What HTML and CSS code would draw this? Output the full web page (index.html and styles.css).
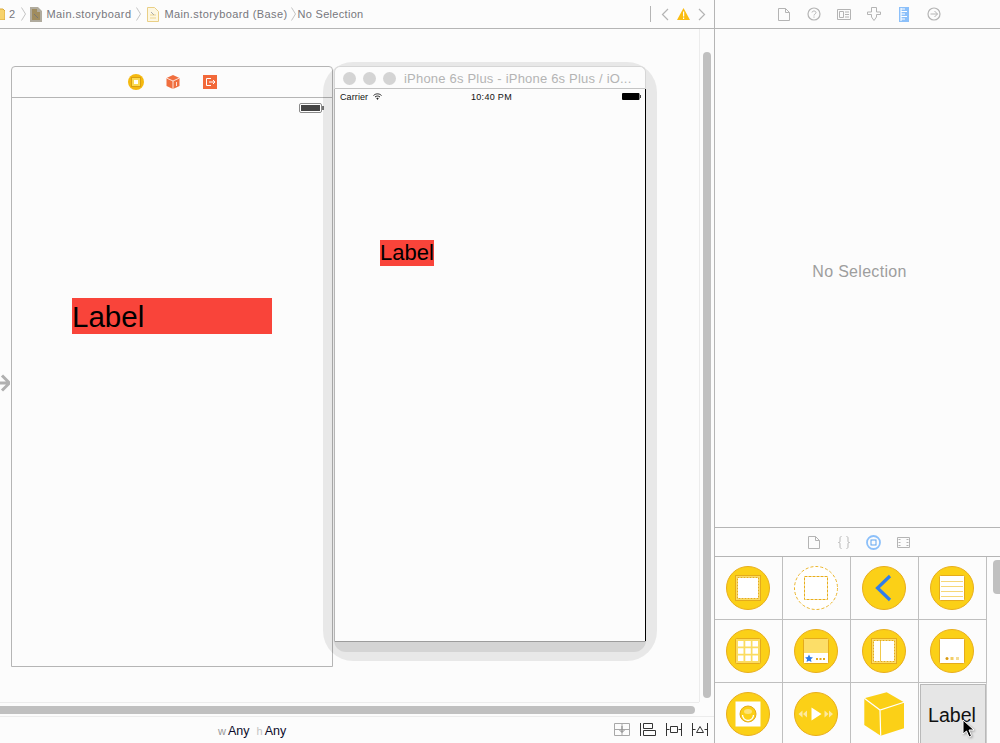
FILE: index.html
```html
<!DOCTYPE html>
<html lang="en">
<head>
<meta charset="utf-8">
<title>Main.storyboard</title>
<link rel="stylesheet" href="styles.css">
</head>
<body>
<div class="app">
  <section class="editor">
    <header class="jumpbar">
      <div class="crumbs">
        <svg class="folder" width="5" height="12" viewBox="0 0 5 12"><path d="M-6 1h9l2 2v9H-6z" fill="#f7d26a" stroke="#d9a93a"/></svg>
        <span class="crumb">2</span>
        <svg class="chev" width="5" height="14" viewBox="0 0 5 14"><path d="M.5.5 4.500 7 .5 13.500" fill="none" stroke="#c4c4c4"/></svg>
        <svg class="doc" width="12" height="15" viewBox="0 0 12 15"><path d="M0 0h8l4 4v11H0z" fill="#b0ab9e"/><path d="M2 2h5v3h3v8H2z" fill="#a08c5e"/><path d="M4 7l4 4" stroke="#777" fill="none"/></svg>
        <span class="crumb">Main.storyboard</span>
        <svg class="chev" width="5" height="14" viewBox="0 0 5 14"><path d="M.5.5 4.500 7 .5 13.500" fill="none" stroke="#c4c4c4"/></svg>
        <svg class="doc doc-base" width="12" height="15" viewBox="0 0 12 15"><path d="M.5.5h7l4 4v10H.5z" fill="#fdf7e2" stroke="#e9cf86"/><path d="M3 8h6M3 11h6" stroke="#edd58f" fill="none"/><path d="M4 5l3 3" stroke="#aaa" fill="none"/></svg>
        <span class="crumb">Main.storyboard (Base)</span>
        <svg class="chev chev-last" width="5" height="14" viewBox="0 0 5 14"><path d="M.5.5 4.500 7 .5 13.500" fill="none" stroke="#c4c4c4"/></svg>
        <span class="crumb tight">No Selection</span>
      </div>
      <div class="issues">
        <svg width="8" height="13" viewBox="0 0 8 13"><path d="M7 1 1.500 6.500 7 12" fill="none" stroke="#b4b4b4" stroke-width="1.200"/></svg>
        <svg width="13" height="12" viewBox="0 0 13 12"><path d="M6.500 0 13 12H0z" fill="#fbbd12"/><path d="M6 3.500h1.200v5H6zM6 9.500h1.200V11H6z" fill="#fff"/></svg>
        <svg width="8" height="13" viewBox="0 0 8 13"><path d="M1 1l5.500 5.500L1 12" fill="none" stroke="#b4b4b4" stroke-width="1.200"/></svg>
      </div>
    </header>

    <div class="canvas">
      <article class="scene">
        <div class="scene-bar">
          <svg width="16" height="16" viewBox="0 0 16 16"><circle cx="8" cy="8" r="8" fill="#f5b90f"/><rect x="3.500" y="3.500" width="9" height="9" fill="#fbd94f" stroke="#d99f10"/><rect x="6" y="6" width="4" height="4" fill="#fff"/></svg>
          <svg width="16" height="16" viewBox="0 0 16 16"><path d="M8 1l6.500 3v8L8 15l-6.500-3V4z" fill="#f06f3f"/><path d="M1.500 4 8 7l6.500-3M8 7v8M11.500 8v4" stroke="#fff" fill="none" stroke-width=".8"/></svg>
          <svg width="16" height="16" viewBox="0 0 16 16"><rect x="1" y="1" width="14" height="14" fill="#f2693a"/><path d="M9 4.500H4.500v7H9M7 8h6M11 6l2 2-2 2" fill="none" stroke="#fff"/></svg>
        </div>
        <div class="scene-body">
          <svg class="scene-battery" width="25" height="10" viewBox="0 0 25 10"><rect x=".5" y=".5" width="22" height="9" rx="1.500" fill="#fff" stroke="#8a8a8a"/><rect x="2" y="2" width="19" height="6" fill="#444"/><rect x="23" y="3" width="2" height="4" fill="#777"/></svg>
          <div class="label label-big">Label</div>
        </div>
      </article>

      <svg class="entry-arrow" width="10" height="20" viewBox="0 0 10 20"><path d="M-4 10h12M2 2.500l7.500 7.500L2 17.500" fill="none" stroke="#b0b0b0" stroke-width="3"/></svg>

      <div class="shadow-outer"></div>
      <div class="shadow-inner"></div>

      <article class="sim">
        <div class="sim-title">
          <i class="light"></i><i class="light"></i><i class="light"></i>
          <span class="sim-name">iPhone 6s Plus - iPhone 6s Plus / iO...</span>
        </div>
        <div class="sim-screen">
          <div class="status">
            <span class="carrier">Carrier</span>
            <svg class="wifi" width="9" height="7" viewBox="0 0 9 7"><path d="M.5 2.500C3 .3 6 .3 8.500 2.500M2 4c1.600-1.300 3.400-1.300 5 0" fill="none" stroke="#222"/><path d="M3.300 5.200 4.500 7l1.200-1.800c-.8-.5-1.600-.5-2.400 0z" fill="#222"/></svg>
            <span class="clock">10:40 PM</span>
            <svg class="sim-battery" width="19" height="7" viewBox="0 0 19 7"><rect width="17.500" height="7" rx="1" fill="#000"/><rect x="18" y="2" width="1" height="3" fill="#444"/></svg>
          </div>
          <div class="label label-small">Label</div>
        </div>
      </article>

      <div class="scroll-line-v"></div>
      <div class="scroll-v"></div>
      <div class="scroll-line-h1"></div>
      <div class="scroll-h"></div>
    </div>

    <footer class="sizebar">
      <div class="size-class">
        <span class="dim">w</span><span class="any">Any</span>
        <span class="dim dim-h">h</span><span class="any">Any</span>
      </div>
      <div class="layout-tools">
        <svg width="16" height="13" viewBox="0 0 16 13"><path d="M.5.500h15v12H.5zM.5 6.500h15M8 .5v12" fill="none" stroke="#a8a8a8"/><path d="M8 3v6M5.500 7 8 9.500 10.500 7" fill="none" stroke="#8a8a8a"/></svg>
        <svg width="16" height="13" viewBox="0 0 16 13"><path d="M.5 0v13M3.500.5h9v5h-9zM3.500 7.500h12v5h-12z" fill="none" stroke="#333"/></svg>
        <svg width="16" height="13" viewBox="0 0 16 13"><path d="M.5 0v13M15.500 0v13M.5 6.500h3M12.500 6.500h3M4.500 3.500h7v6h-7z" fill="none" stroke="#333"/></svg>
        <svg width="16" height="13" viewBox="0 0 16 13"><path d="M.5 0v13M15.500 0v13M.5 6.500h3M12.500 6.500h3M4.500 9.500 8 3.500l3.500 6z" fill="none" stroke="#333"/></svg>
      </div>
    </footer>
  </section>

  <aside class="inspector">
    <nav class="tabs tabs-top">
      <span class="tab"><svg width="12" height="13" viewBox="0 0 12 13"><path d="M.5.5h7l4 4v8H.5zM7.500.5v4h4" fill="none" stroke="#b4b4b4"/></svg></span>
      <span class="tab"><svg width="14" height="14" viewBox="0 0 14 14"><circle cx="7" cy="7" r="6" fill="none" stroke="#b4b4b4" stroke-width="1.200"/><path d="M5 5.500C5 3.500 9 3.500 9 5.500c0 1.500-2 1.500-2 3M7 9.500v1.200" fill="none" stroke="#b4b4b4"/></svg></span>
      <span class="tab"><svg width="14" height="11" viewBox="0 0 14 11"><path d="M.5.5h13v10H.5z" fill="none" stroke="#b4b4b4"/><path d="M2.500 2.500h4v6h-4z" fill="none" stroke="#b4b4b4"/><path d="M8 3h4M8 5.500h4M8 8h4" stroke="#b4b4b4"/></svg></span>
      <span class="tab"><svg width="14" height="14" viewBox="0 0 14 14"><path d="M4.500.5h5v4.500h4v2.500h-4v2.500L7 13.500 4.500 10V7.500h-4V5h4z" fill="none" stroke="#b4b4b4"/></svg></span>
      <span class="tab"><svg width="10" height="15" viewBox="0 0 10 15"><rect width="10" height="15" fill="#8cc0fa"/><path d="M2 1v13M2 2h4M2 4.500h6M2 7h4M2 9.500h6M2 12h4" stroke="#fff" stroke-width="1.100"/></svg></span>
      <span class="tab"><svg width="14" height="14" viewBox="0 0 14 14"><circle cx="7" cy="7" r="6" fill="none" stroke="#b4b4b4" stroke-width="1.200"/><path d="M3.500 7h7M7.500 4l3 3-3 3" fill="none" stroke="#b4b4b4"/></svg></span>
    </nav>
    <div class="inspector-body"><p class="empty">No Selection</p></div>

    <nav class="tabs tabs-lib">
      <span class="tab"><svg width="12" height="13" viewBox="0 0 12 13"><path d="M.5.5h7l4 4v8H.5zM7.500.5v4h4" fill="none" stroke="#b4b4b4"/></svg></span>
      <span class="tab"><svg width="12" height="13" viewBox="0 0 12 13"><path d="M3.500.5C2 .5 2 1.500 2 3v2c0 1-.5 1.500-1.500 1.500C1.500 6.500 2 7 2 8v2c0 1.500 0 2.500 1.500 2.500M8.500.5C10 .5 10 1.500 10 3v2c0 1 .5 1.500 1.500 1.500-1 0-1.500.5-1.500 1.500v2c0 1.500 0 2.500-1.500 2.500" fill="none" stroke="#b9b9b9"/></svg></span>
      <span class="tab"><svg width="15" height="15" viewBox="0 0 15 15"><circle cx="7.500" cy="7.500" r="6.500" fill="none" stroke="#8cc0fa" stroke-width="1.800"/><rect x="5" y="5" width="5" height="5" fill="none" stroke="#5ea4f0"/></svg></span>
      <span class="tab"><svg width="13" height="11" viewBox="0 0 13 11"><path d="M.5.5h12v10H.5z" fill="none" stroke="#b4b4b4"/><path d="M1.500 2.500h2M1.500 5.500h2M1.500 8.500h2M9.500 2.500h2M9.500 5.500h2M9.500 8.500h2" stroke="#b4b4b4"/></svg></span>
    </nav>
    <div class="library">
      <div class="grid">
        <div class="cell"><svg width="44" height="44" viewBox="0 0 44 44"><circle class="disc" cx="22" cy="22" r="21.500"/><rect x="9.500" y="9.500" width="25" height="25" fill="#fbdc60" stroke="#e5ab1c"/><rect x="11.500" y="11.500" width="21" height="21" fill="#fff" stroke="#e5ab1c" stroke-dasharray="2 1"/></svg></div>
        <div class="cell"><svg width="44" height="44" viewBox="0 0 44 44"><circle cx="22" cy="22" r="21.500" fill="#fff" stroke="#ecb62c" stroke-dasharray="3 2"/><rect x="10.500" y="10.500" width="23" height="23" fill="#fff" stroke="#e8ae1c" stroke-dasharray="3 1"/></svg></div>
        <div class="cell"><svg width="44" height="44" viewBox="0 0 44 44"><circle class="disc" cx="22" cy="22" r="21.500"/><path d="M28 10 15.500 22 28 34" fill="none" stroke="#2f7dec" stroke-width="3.200"/></svg></div>
        <div class="cell"><svg width="44" height="44" viewBox="0 0 44 44"><circle class="disc" cx="22" cy="22" r="21.500"/><rect x="9.500" y="9.500" width="25" height="25" rx="1" fill="#fff" stroke="#e5ab1c"/><path d="M11 15.500h22M11 20.500h22M11 25.500h22M11 30.500h22" stroke="#f6d778"/></svg></div>

        <div class="cell"><svg width="44" height="44" viewBox="0 0 44 44"><circle class="disc" cx="22" cy="22" r="21.500"/><rect x="9.500" y="9.500" width="25" height="25" rx="1" fill="#fbdc60" stroke="#e5ab1c"/><path fill="#fff" d="M12 12h5.500v5.500H12zM19.300 12h5.500v5.500h-5.500zM26.500 12H32v5.500h-5.500zM12 19.300h5.500v5.500H12zM19.300 19.300h5.500v5.500h-5.500zM26.500 19.300H32v5.500h-5.500zM12 26.500h5.500V32H12zM19.300 26.500h5.500V32h-5.500zM26.500 26.500H32V32h-5.500z"/></svg></div>
        <div class="cell"><svg width="44" height="44" viewBox="0 0 44 44"><circle class="disc" cx="22" cy="22" r="21.500"/><rect x="9.500" y="9.500" width="25" height="25" rx="1" fill="#fff" stroke="#e5ab1c"/><rect x="10" y="10" width="24" height="14" fill="#fcde68"/><path d="M15 25.500l1.200 2.600 2.800.3-2.100 1.900.6 2.800-2.500-1.400-2.500 1.400.6-2.800-2.100-1.900 2.800-.3z" fill="#2f7dec"/><path d="M22 29h2v2h-2zM25.500 29h2v2h-2zM29 29h2v2h-2z" fill="#e5ab1c"/></svg></div>
        <div class="cell"><svg width="44" height="44" viewBox="0 0 44 44"><circle class="disc" cx="22" cy="22" r="21.500"/><rect x="9.500" y="9.500" width="25" height="25" fill="#fcde68" stroke="#e5ab1c"/><rect x="11.500" y="11.500" width="21" height="21" fill="#fff" stroke="#e5ab1c" stroke-dasharray="2 1"/><path d="M18.500 12v20" stroke="#f0c94a"/></svg></div>
        <div class="cell"><svg width="44" height="44" viewBox="0 0 44 44"><circle class="disc" cx="22" cy="22" r="21.500"/><rect x="9.500" y="9.500" width="25" height="25" rx="1" fill="#fff" stroke="#e5ab1c"/><circle cx="17" cy="29.500" r="1.500" fill="#d99a10"/><rect x="20.500" y="28" width="3" height="3" fill="#f3cd64"/><rect x="26" y="28" width="3" height="3" fill="#f3dc96"/></svg></div>

        <div class="cell"><svg width="44" height="44" viewBox="0 0 44 44"><circle class="disc" cx="22" cy="22" r="21.500"/><rect x="9.500" y="9.500" width="25" height="25" fill="#fff"/><circle cx="22" cy="22" r="8" fill="#fbd017" stroke="#e5ab1c"/><path d="M16.500 23a5.500 5.500 0 0 0 11 0" fill="none" stroke="#fff" stroke-width="1.300"/><ellipse cx="22" cy="19.500" rx="4" ry="2.500" fill="#fde37a"/></svg></div>
        <div class="cell"><svg width="44" height="44" viewBox="0 0 44 44"><circle class="disc" cx="22" cy="22" r="21.500"/><path d="M17.500 15.500v13L27.500 22z" fill="#fff"/><path d="M8.500 18.500v7L4.500 22zM13 18.500v7L9 22zM30.500 18.500v7l4-3.500zM35 18.500v7l4-3.500z" fill="#fde9a0"/></svg></div>
        <div class="cell"><svg width="44" height="44" viewBox="0 0 44 44"><path d="M24.700.3 42 10.300v26L18.700 43.700 2.300 33V6.300z" fill="#fbd017"/><path d="M2.300 6.300 18 18 42 10.300M18 18l.7 25.700" fill="none" stroke="#fff" stroke-width="1.200"/></svg></div>
        <div class="cell cell-selected">
          <span class="lib-label">Label</span>
          <svg class="cursor" width="14" height="20" viewBox="0 0 14 20"><path d="M1 1v14l3.500-3 2.500 6 2.500-1-2.500-6H12z" fill="#000" stroke="#fff"/></svg>
        </div>
      </div>
      <div class="lib-scroll"><div class="lib-thumb"></div></div>
    </div>
  </aside>
</div>
</body>
</html>
```
FILE: styles.css
```css
* { box-sizing: border-box; }
html, body { margin: 0; padding: 0; }
body { font-family: "Liberation Sans", Arial, sans-serif; background: #fcfcfc; }
svg { display: block; flex: none; }

.app { display: flex; width: 1000px; height: 743px; overflow: hidden; background: #fcfcfc; }

.editor { width: 715px; display: flex; flex-direction: column; border-right: 1px solid #b5b5b5; }

.jumpbar { height: 29px; flex: none; border-bottom: 1px solid #b5b5b5; display: flex; align-items: center; justify-content: space-between; }
.crumbs { display: flex; align-items: center; font-size: 11px; color: #77777c; }
.folder { margin-right: 4px; }
.crumb { letter-spacing: .4px; white-space: nowrap; }
.crumbs .chev { margin: 0 4px 0 5px; }
.crumbs .chev-last { margin-left: 3px; }
.crumbs .doc { margin: 0 5px 0 0; }
.crumbs .doc-base { margin-left: 2px; }
.crumbs .tight { margin-left: -2px; letter-spacing: .3px; }
.issues { display: flex; align-items: center; gap: 8px; height: 16px; padding: 0 8px 0 10px; border-left: 1px solid #b5b5b5; }

.canvas { flex: 1; position: relative; overflow: hidden; }

.scene { position: absolute; left: 11px; top: 37px; width: 322px; height: 601px; border: 1px solid #b5b5b5; border-radius: 4px 4px 0 0; display: flex; flex-direction: column; }
.scene-bar { height: 31px; flex: none; border-bottom: 1px solid #b5b5b5; display: flex; justify-content: center; align-items: center; gap: 21px; padding-left: 2px; }
.scene-body { flex: 1; position: relative; }
.scene-battery { position: absolute; right: 8px; top: 5px; }

.label { position: absolute; background: #f9443a; color: #000; white-space: nowrap; display: flex; align-items: center; }
.label-big { left: 60px; top: 200px; width: 200px; height: 36px; padding-top: 1px; font-size: 29.500px; }
.label-small { left: 45px; top: 151px; width: 54px; height: 26px; font-size: 22px; }

.entry-arrow { position: absolute; left: 0; top: 344px; }

.shadow-outer { position: absolute; left: 323px; top: 33px; width: 334px; height: 599px; border-radius: 30px; background: rgba(0, 0, 0, .08); }
.shadow-inner { position: absolute; left: 334px; top: 60px; width: 312px; height: 563px; border-radius: 12px; background: rgba(0, 0, 0, .085); }

.sim { position: absolute; left: 334px; top: 37px; width: 312px; height: 576px; background: #fcfcfc; border-radius: 6px 6px 0 0; border: 1px solid #d6d6d6; border-bottom: 1px solid #9c9c9c; display: flex; flex-direction: column; }
.sim-title { height: 22px; flex: none; display: flex; align-items: center; gap: 7px; padding: 1px 0 0 8px; border-bottom: 1px solid #c4c4c4; }
.light { width: 13px; height: 13px; border-radius: 50%; background: #d4d4d4; }
.sim-name { margin-left: 1px; font-size: 13px; letter-spacing: .2px; color: #b4b4b4; white-space: nowrap; }
.sim-screen { flex: 1; position: relative; border-right: 1px solid #000; margin-right: -1px; border-left: 1px solid #b5b5b5; margin-left: -1px; }
.status { display: flex; align-items: center; height: 15px; padding-left: 5px; font-size: 9px; color: #111; position: relative; }
.carrier { letter-spacing: .1px; }
.wifi { margin-left: 5px; }
.clock { position: absolute; left: 136px; letter-spacing: .3px; }
.sim-battery { position: absolute; right: 4px; top: 4px; }

.scroll-line-v { position: absolute; left: 699px; top: 0; bottom: 14px; width: 1px; background: #ececec; }
.scroll-v { position: absolute; left: 703px; top: 23px; width: 8px; height: 646px; border-radius: 4px; background: #c0c0c0; }
.scroll-line-h1 { position: absolute; left: 0; right: 15px; top: 673px; height: 1px; background: #ececec; }
.scroll-h { position: absolute; left: -10px; top: 677px; width: 705px; height: 8px; border-radius: 4px; background: #c0c0c0; }

.sizebar { height: 27px; flex: none; border-top: 1px solid #ececec; display: flex; align-items: center; justify-content: space-between; padding: 0 6px 0 218px; }
.size-class { display: flex; align-items: baseline; padding-top: 1px; font-size: 12.500px; color: #0b0b2a; }
.dim { color: #9a9a9a; font-size: 11px; margin-right: 2px; }
.dim-h { margin-left: 7px; color: #c4c4c4; }
.layout-tools { display: flex; gap: 10px; margin-top: -1px; }

.inspector { flex: 1; display: flex; flex-direction: column; min-width: 0; }
.tabs { display: flex; justify-content: center; align-items: center; flex: none; }
.tab { width: 30px; display: flex; justify-content: center; }
.tabs-top { height: 29px; padding-left: 3px; border-bottom: 1px solid #b5b5b5; }
.inspector-body { height: 498px; flex: none; display: flex; justify-content: center; }
.empty { margin: 234px 0 0 4px; font-size: 16px; letter-spacing: .3px; color: #9e9e9e; height: 20px; }
.tabs-lib { height: 30px; padding-left: 2px; border-top: 1px solid #b5b5b5; border-bottom: 1px solid #b5b5b5; }

.library { flex: 1; display: flex; min-height: 0; }
.grid { width: 272px; display: grid; grid-template-columns: repeat(4, 68px); grid-auto-rows: 63px; border-right: 1px solid #cfcfcf; }
.cell { border-right: 1px solid #bfbfbf; border-bottom: 1px solid #bfbfbf; display: flex; justify-content: center; padding: 9px 1px 0 0; position: relative; }
.disc { fill: #fbd017; stroke: #e8ae1c; }
.cell-selected { padding: 0; margin: 1px 1px 0; background: #e6e6e6; border: 1px solid #b9b9b9; border-bottom: 0; justify-content: center; align-items: center; }
.lib-label { font-size: 19.600px; color: #111; margin-right: 2px; }
.cursor { position: absolute; left: 41px; top: 34px; filter: drop-shadow(1px 1px 1px rgba(0,0,0,.3)); }
.lib-scroll { flex: 1; padding: 3px 0 0 6px; }
.lib-thumb { width: 7px; height: 34px; border-radius: 4px 0 0 4px; background: #c0c0c0; }
```
